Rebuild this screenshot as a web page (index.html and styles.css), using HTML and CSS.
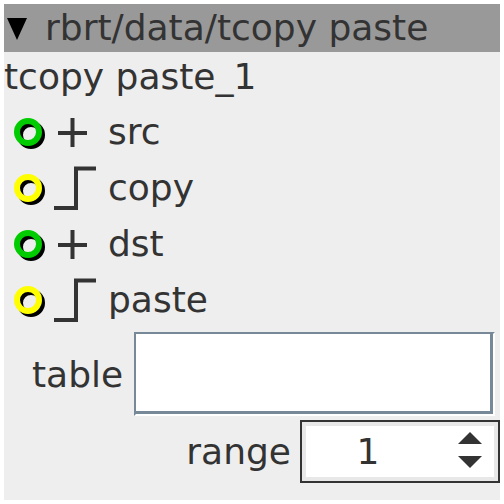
FILE: index.html
```html
<!DOCTYPE html>
<html>
<head>
<meta charset="utf-8">
<link rel="stylesheet" href="styles.css">
</head>
<body>
<div class="panel">
  <div class="header">
    <svg class="caret" width="41" height="48" viewBox="0 0 41 48"><polygon points="3,14 23,14 13,36" fill="#000"/></svg>
    <span class="htext">rbrt/data/tcopy paste</span>
  </div>
  <div class="title">tcopy paste_1</div>
  <div class="port">
    <svg class="picon" width="100" height="56" viewBox="0 0 100 56">
      <circle cx="27" cy="31" r="11" fill="none" stroke="#000" stroke-width="6"/>
      <circle cx="24" cy="28" r="11" fill="none" stroke="#00cc00" stroke-width="6"/>
      <path d="M54 29 H83 M68.5 14 V43" stroke="#333" stroke-width="4" fill="none"/>
    </svg>
    <span class="plabel">src</span>
  </div>
  <div class="port">
    <svg class="picon" width="100" height="56" viewBox="0 0 100 56">
      <circle cx="27" cy="31" r="11" fill="none" stroke="#000" stroke-width="6"/>
      <circle cx="24" cy="28" r="11" fill="none" stroke="#ffff00" stroke-width="6"/>
      <path d="M50 48 H72 V8.5 H92" stroke="#333" stroke-width="4" fill="none"/>
    </svg>
    <span class="plabel">copy</span>
  </div>
  <div class="port">
    <svg class="picon" width="100" height="56" viewBox="0 0 100 56">
      <circle cx="27" cy="31" r="11" fill="none" stroke="#000" stroke-width="6"/>
      <circle cx="24" cy="28" r="11" fill="none" stroke="#00cc00" stroke-width="6"/>
      <path d="M54 29 H83 M68.5 14 V43" stroke="#333" stroke-width="4" fill="none"/>
    </svg>
    <span class="plabel">dst</span>
  </div>
  <div class="port">
    <svg class="picon" width="100" height="56" viewBox="0 0 100 56">
      <circle cx="27" cy="31" r="11" fill="none" stroke="#000" stroke-width="6"/>
      <circle cx="24" cy="28" r="11" fill="none" stroke="#ffff00" stroke-width="6"/>
      <path d="M50 48 H72 V8.5 H92" stroke="#333" stroke-width="4" fill="none"/>
    </svg>
    <span class="plabel">paste</span>
  </div>
  <div class="field table-row">
    <span class="flabel">table</span>
    <div class="entry-outer"><div class="entry-inner"></div></div>
  </div>
  <div class="field range-row">
    <span class="flabel">range</span>
    <div class="spin">
      <div class="spin-inner">
        <span class="spin-val">1</span>
        <svg class="arrows" width="30" height="40" viewBox="0 0 30 40">
          <polygon points="2,12 26,12 14,0" fill="#333"/>
          <polygon points="2,24 26,24 14,36" fill="#333"/>
        </svg>
      </div>
    </div>
  </div>
</div>
</body>
</html>
```

FILE: styles.css
```css
html, body {
  margin: 0;
  padding: 0;
  background: #ffffff;
}
body {
  font-family: "DejaVu Sans", sans-serif;
  color: #333333;
}
.panel {
  margin: 4px;
  width: 496px;
  height: 496px;
  background: #eeeeee;
  display: flex;
  flex-direction: column;
}
.header {
  height: 48px;
  background: #999999;
  display: flex;
  align-items: center;
  font-size: 36px;
  line-height: 48px;
  white-space: nowrap;
}
.caret {
  flex: none;
  display: block;
  width: 41px;
  height: 48px;
}
.title {
  height: 52px;
  line-height: 50px;
  font-size: 36px;
  white-space: nowrap;
}
.port {
  height: 56px;
  display: flex;
  align-items: center;
}
.picon {
  flex: none;
  display: block;
}
.plabel {
  font-size: 36px;
  margin-left: 4px;
  line-height: 56px;
}
.field {
  display: flex;
  align-items: center;
  font-size: 36px;
}
.table-row {
  margin-top: 4px;
  height: 84px;
  padding-left: 28px;
  padding-right: 5px;
}
.table-row .flabel {
  margin-right: 11px;
}
.entry-outer {
  flex: 1;
  height: 84px;
  box-sizing: border-box;
  border: 2px solid;
  border-color: #778899 #ffffff #ffffff #778899;
}
.entry-inner {
  height: 100%;
  box-sizing: border-box;
  background: #ffffff;
  border-style: solid;
  border-width: 0 3px 3px 0;
  border-color: #ffffff #778899 #778899 #ffffff;
}
.range-row {
  margin-top: 4px;
  height: 63px;
  justify-content: flex-end;
}
.range-row .flabel {
  margin-right: 9px;
}
.spin {
  width: 200px;
  height: 63px;
  box-sizing: border-box;
  border: 2px solid #333333;
  background: #e8e8e8;
  padding: 4px;
}
.spin-inner {
  height: 100%;
  background: #ffffff;
  display: flex;
  align-items: center;
}
.spin-val {
  width: 124px;
  text-align: center;
  font-size: 36px;
}
.arrows {
  display: block;
  margin-left: 26px;
}
```
